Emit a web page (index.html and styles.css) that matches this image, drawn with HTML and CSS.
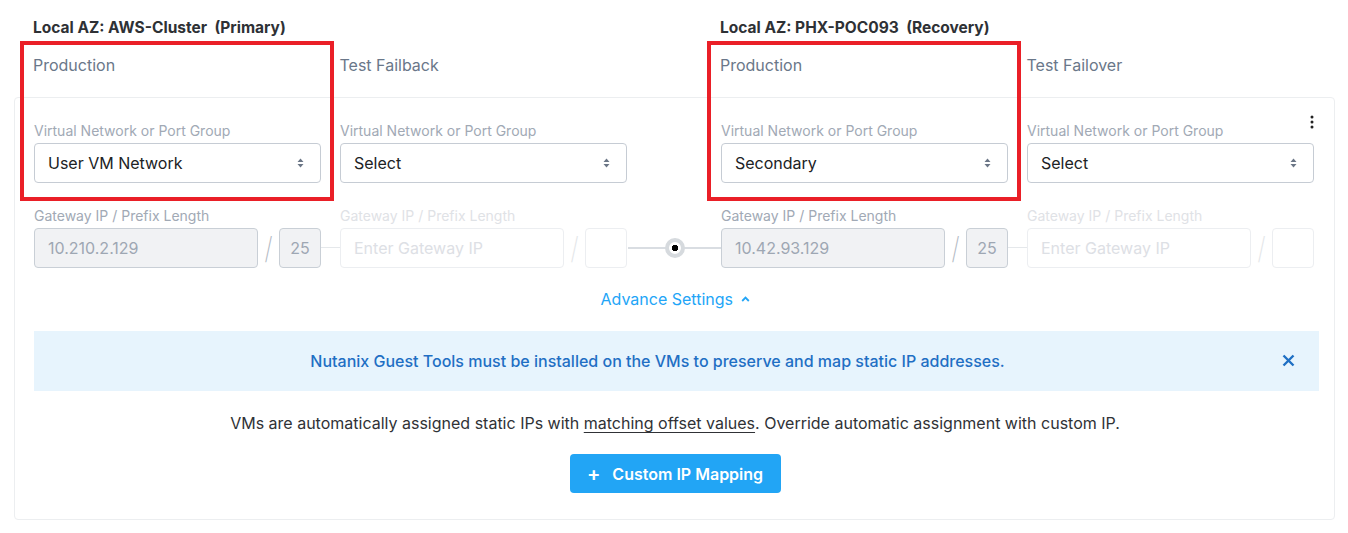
FILE: index.html
```html
<!DOCTYPE html>
<html lang="en">
<head>
<meta charset="utf-8">
<title>Network Mapping</title>
<link rel="stylesheet" href="styles.css">
</head>
<body>
<div class="page">
  <div class="top">
    <div class="group">
      <div class="az-title">Local AZ: AWS-Cluster&nbsp; (Primary)</div>
      <div class="tabs"><span class="tab">Production</span><span class="tab">Test Failback</span></div>
    </div>
    <div class="group">
      <div class="az-title">Local AZ: PHX-POC093&nbsp; (Recovery)</div>
      <div class="tabs"><span class="tab">Production</span><span class="tab">Test Failover</span></div>
    </div>
  </div>

  <div class="card">
    <button class="kebab" aria-label="More">
      <svg width="4" height="14" viewBox="0 0 4 14"><circle cx="2" cy="2" r="1.5" fill="#222"/><circle cx="2" cy="7" r="1.5" fill="#222"/><circle cx="2" cy="12" r="1.5" fill="#222"/></svg>
    </button>

    <div class="row">
      <div class="group">
        <div class="field">
          <div class="label">Virtual Network or Port Group</div>
          <div class="select"><span>User VM Network</span><svg class="updown" width="7" height="10" viewBox="0 0 7 10"><path d="M3.5 0.5 L6.5 4 H0.5 Z M3.5 9.5 L6.5 6 H0.5 Z" fill="#6b7686"/></svg></div>
        </div>
        <div class="link-gap"></div>
        <div class="field">
          <div class="label">Virtual Network or Port Group</div>
          <div class="select"><span>Select</span><svg class="updown" width="7" height="10" viewBox="0 0 7 10"><path d="M3.5 0.5 L6.5 4 H0.5 Z M3.5 9.5 L6.5 6 H0.5 Z" fill="#6b7686"/></svg></div>
        </div>
      </div>
      <div class="connector"></div>
      <div class="group">
        <div class="field">
          <div class="label">Virtual Network or Port Group</div>
          <div class="select"><span>Secondary</span><svg class="updown" width="7" height="10" viewBox="0 0 7 10"><path d="M3.5 0.5 L6.5 4 H0.5 Z M3.5 9.5 L6.5 6 H0.5 Z" fill="#6b7686"/></svg></div>
        </div>
        <div class="link-gap"></div>
        <div class="field">
          <div class="label">Virtual Network or Port Group</div>
          <div class="select"><span>Select</span><svg class="updown" width="7" height="10" viewBox="0 0 7 10"><path d="M3.5 0.5 L6.5 4 H0.5 Z M3.5 9.5 L6.5 6 H0.5 Z" fill="#6b7686"/></svg></div>
        </div>
      </div>
    </div>

    <div class="row row-gw">
      <div class="group">
        <div class="field">
          <div class="label">Gateway IP / Prefix Length</div>
          <div class="ip-line"><div class="input filled">10.210.2.129</div><span class="slash">/</span><div class="input prefix filled">25</div></div>
        </div>
        <div class="link-gap line"></div>
        <div class="field faded">
          <div class="label">Gateway IP / Prefix Length</div>
          <div class="ip-line"><div class="input">Enter Gateway IP</div><span class="slash">/</span><div class="input prefix"></div></div>
        </div>
      </div>
      <div class="connector line"><span class="node"></span></div>
      <div class="group">
        <div class="field">
          <div class="label">Gateway IP / Prefix Length</div>
          <div class="ip-line"><div class="input filled">10.42.93.129</div><span class="slash">/</span><div class="input prefix filled">25</div></div>
        </div>
        <div class="link-gap line"></div>
        <div class="field faded">
          <div class="label">Gateway IP / Prefix Length</div>
          <div class="ip-line"><div class="input">Enter Gateway IP</div><span class="slash">/</span><div class="input prefix"></div></div>
        </div>
      </div>
    </div>

    <div class="advance">Advance Settings <svg width="9" height="6" viewBox="0 0 9 6"><path d="M1.2 5 L4.5 1.6 L7.8 5" fill="none" stroke="#22a5f7" stroke-width="1.8"/></svg></div>

    <div class="banner">
      <span class="banner-text">Nutanix Guest Tools must be installed on the VMs to preserve and map static IP addresses.</span>
      <button class="close" aria-label="Close"><svg width="13" height="13" viewBox="0 0 13 13"><path d="M1.5 1.5 L11.5 11.5 M11.5 1.5 L1.5 11.5" stroke="#1f6fc4" stroke-width="2.4" fill="none"/></svg></button>
    </div>

    <p class="note">VMs are automatically assigned static IPs with <span class="ul">matching offset values</span>. Override automatic assignment with custom IP.</p>

    <div class="btn-row"><button class="primary"><span class="plus">+</span>Custom IP Mapping</button></div>
  </div>

  <div class="highlight hl-left"></div>
  <div class="highlight hl-right"></div>
</div>
</body>
</html>
```

FILE: styles.css
```css
* { box-sizing: border-box; }
html, body { margin: 0; padding: 0; background: #fff; }
body {
  font-family: "Inter", "Liberation Sans", sans-serif;
  color: #2e3033;
}
.page {
  position: relative;
  width: 1348px;
  height: 533px;
}
.top {
  display: flex;
  gap: 93px;
  padding-left: 34px;
  padding-top: 18px;
}
.group {
  width: 594px;
  display: flex;
}
.top .group { flex-direction: column; }
.az-title {
  font-size: 15.5px;
  font-weight: 650;
  line-height: 20px;
  color: #2e3135;
  margin-left: -1px;
}
.tabs {
  display: flex;
  gap: 19px;
  margin-top: 17px;
}
.tab {
  flex: 1;
  font-size: 16px;
  line-height: 20px;
  color: #6a7789;
  margin-left: -1px;
}
.card {
  position: relative;
  margin: 22px 0 0 14px;
  width: 1321px;
  height: 423px;
  border: 1px solid #eceef0;
  border-radius: 4px;
  padding: 25px 18px 0 19px;
}
.kebab {
  position: absolute;
  top: 15px;
  right: 18px;
  width: 8px;
  height: 18px;
  padding: 2px;
  border: 0;
  background: none;
  display: flex;
  align-items: center;
  justify-content: center;
}
.row { display: flex; }
.row-gw { margin-top: 25px; }
.field { width: 287px; flex: none; }
.link-gap { width: 19px; flex: none; }
.link-gap.line {
  align-self: flex-end;
  height: 21px;
  border-top: 1px solid #e5e8eb;
}
.connector { width: 93px; flex: none; }
.connector.line {
  align-self: flex-end;
  height: 40px;
  display: flex;
  align-items: center;
  justify-content: center;
  background: linear-gradient(#d9dde2, #d9dde2) center / 100% 2px no-repeat;
}
.node {
  width: 20px;
  height: 20px;
  border-radius: 50%;
  border: 4px solid #d6dade;
  background: radial-gradient(circle, #000 0 3px, #fff 3.5px);
}
.label {
  font-size: 14px;
  line-height: 16px;
  color: #a1a9b5;
  margin-bottom: 4px;
}
.select {
  height: 40px;
  border: 1px solid #c6ccd4;
  border-radius: 4px;
  display: flex;
  align-items: center;
  justify-content: space-between;
  padding: 0 16px 0 13px;
  font-size: 16px;
  color: #202224;
}
.ip-line {
  display: flex;
  align-items: center;
}
.input {
  height: 40px;
  width: 224px;
  border: 1px solid #c9cfd6;
  border-radius: 4px;
  display: flex;
  align-items: center;
  padding-left: 13px;
  font-size: 16px;
  color: #9ea7b3;
}
.input.filled { background: #f1f2f4; }
.input.prefix {
  width: 42px;
  padding: 0;
  justify-content: center;
}
.slash {
  width: 21px;
  text-align: center;
  font-size: 30px;
  font-weight: 200;
  line-height: 40px;
  color: #b3bac4;
  transform: scaleX(0.8);
}
.faded .label { color: #dfe2e6; }
.faded .input { border-color: #eceef1; color: #dde0e5; }
.faded .slash { color: #e3e6e9; }

.advance {
  margin-top: 21px;
  text-align: center;
  font-size: 16px;
  line-height: 20px;
  color: #22a5f7;
}
.advance svg { margin-left: 3px; vertical-align: 3px; }
.banner {
  margin-top: 22px;
  margin-right: -3px;
  height: 60px;
  background: #e7f4fd;
  display: flex;
  align-items: center;
  justify-content: center;
  position: relative;
}
.banner-text {
  font-size: 16px;
  font-weight: 500;
  color: #1f6fc4;
  margin-left: -38px;
}
.close {
  position: absolute;
  right: 24px;
  top: 23px;
  width: 13px;
  height: 13px;
  padding: 0;
  border: 0;
  background: none;
  display: flex;
}
.note {
  margin: 22px 0 0;
  text-align: center;
  font-size: 16px;
  line-height: 20px;
  color: #303236;
}
.ul { text-decoration: underline; text-underline-offset: 3px; text-decoration-thickness: 1px; }
.btn-row {
  margin-top: 21px;
  display: flex;
  justify-content: center;
}
.primary {
  height: 39px;
  width: 211px;
  border: 0;
  border-radius: 4px;
  background: #22a5f5;
  color: #fff;
  font-family: inherit;
  font-size: 16px;
  font-weight: 600;
  display: flex;
  align-items: center;
  justify-content: center;
}
.plus { font-size: 20px; margin-right: 12px; font-weight: 600; line-height: 1; }

.highlight {
  position: absolute;
  top: 41px;
  width: 314px;
  height: 160px;
  border: 4px solid #ea1f27;
  pointer-events: none;
}
.hl-left { left: 20px; }
.hl-right { left: 707px; }
```
